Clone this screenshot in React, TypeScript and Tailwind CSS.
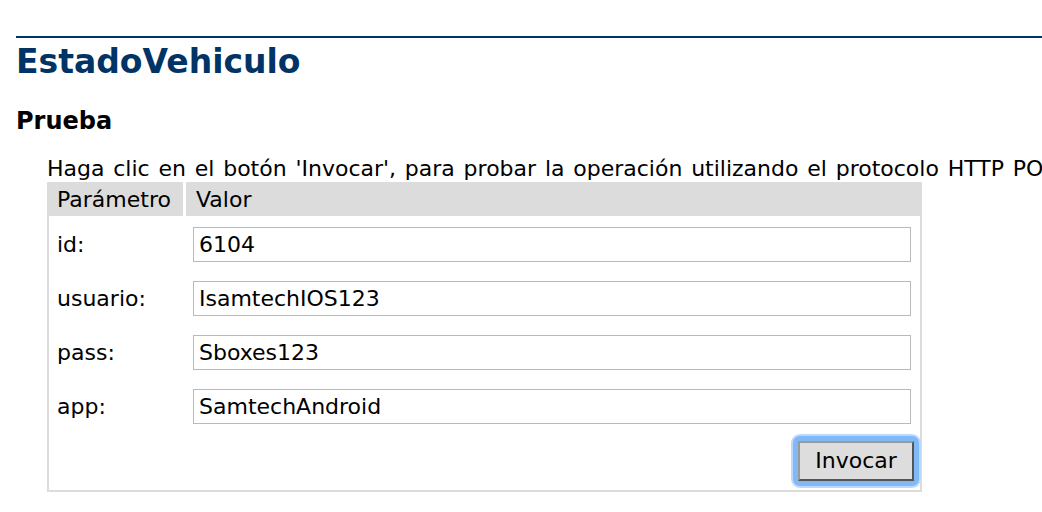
import React from "react";

const params = [
  { name: "id", value: "6104" },
  { name: "usuario", value: "IsamtechIOS123" },
  { name: "pass", value: "Sboxes123" },
  { name: "app", value: "SamtechAndroid" },
];

export default function App() {
  return (
    <div className="h-[512px] w-[1042px] overflow-hidden bg-white font-['DejaVu_Sans',Verdana,sans-serif] text-black">
      <div className="pl-[16px] pt-[36px]">
        <div className="border-t-2 border-[#003366]" />
        <h1 className="mt-[4px] text-[33px] font-bold leading-[40px] text-[#003366]">EstadoVehiculo</h1>
        <h2 className="mt-[24px] text-[24px] font-bold leading-[30px]">Prueba</h2>

        <div className="pl-[31px]">
          <p className="mt-[20px] whitespace-nowrap text-[22px] leading-[26px] [word-spacing:1.8px]">
            Haga clic en el botón 'Invocar', para probar la operación utilizando el protocolo HTTP POST.
          </p>

          <div className="w-[875px] border-2 border-t-0 border-[#dcdcdc] text-[22px]">
            <div className="flex h-[34px] gap-[3px] bg-white">
              <div className="flex w-[134px] items-center bg-[#dcdcdc] pl-[8px]">Parámetro</div>
              <div className="flex flex-1 items-center bg-[#dcdcdc] pl-[10px]">Valor</div>
            </div>

            <div className="flex flex-col gap-[19px] pt-[11px]">
              {params.map((p) => (
                <div key={p.name} className="flex h-[35px] items-center">
                  <div className="w-[144px] pl-[8px]">{p.name}:</div>
                  <input
                    readOnly
                    value={p.value}
                    className="h-[35px] w-[718px] border border-[#b9b9b9] bg-white px-[5px] text-[22px] outline-none"
                  />
                </div>
              ))}
            </div>

            <div className="flex justify-end pr-[6px] pt-[17px] pb-[9px]">
              {/* focus ring */}
              <div className="m-[-5px] rounded-[7px] bg-[#80b8f8] p-[5px] shadow-[0_0_0_2px_#bcd9fb]">
                <button className="block h-[40px] w-[116px] border-2 border-t-[#9a9a9a] border-l-[#9a9a9a] border-r-[#555555] border-b-[#555555] bg-[#dddddd] text-[22px] leading-none text-black">
                  Invocar
                </button>
              </div>
            </div>
          </div>
        </div>
      </div>
    </div>
  );
}
